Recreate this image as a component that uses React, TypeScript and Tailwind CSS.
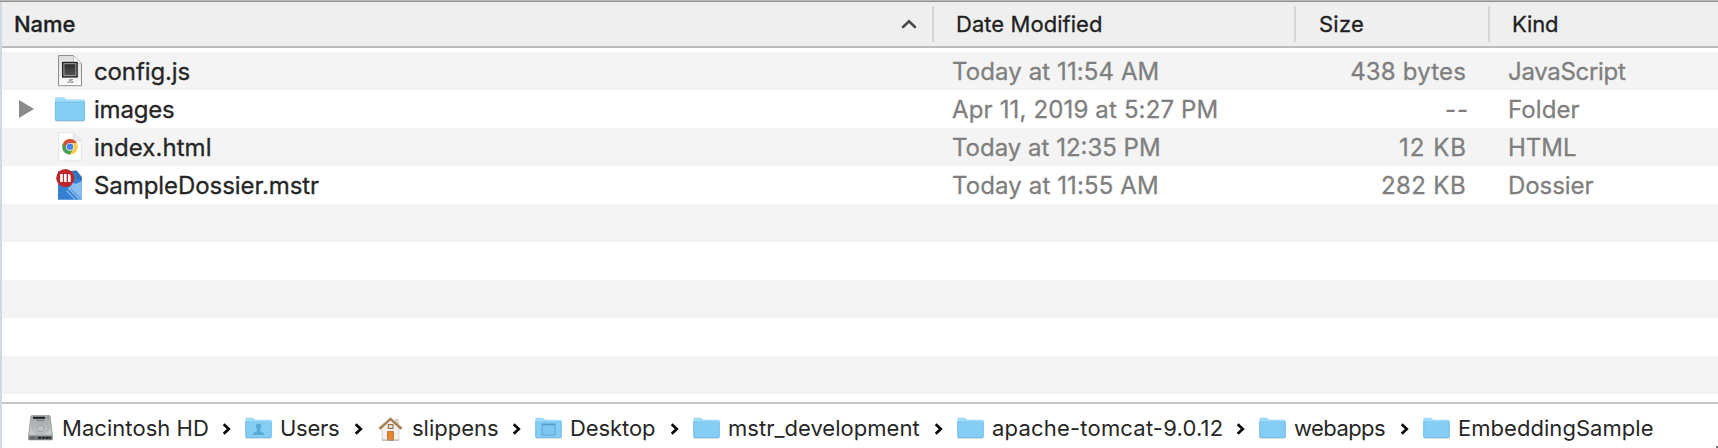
import type { ReactNode } from "react";

function ScriptFileIcon() {
  return (
    <svg viewBox="0 0 32 36" className="h-9 w-8 shrink-0">
      <defs>
        <linearGradient id="js-page" x1="0" y1="0" x2="0" y2="1">
          <stop offset="0" stopColor="#dedede" />
          <stop offset="0.7" stopColor="#efefef" />
          <stop offset="1" stopColor="#ffffff" />
        </linearGradient>
        <linearGradient id="js-core" x1="0" y1="0" x2="0" y2="1">
          <stop offset="0" stopColor="#2c2c2c" />
          <stop offset="1" stopColor="#555555" />
        </linearGradient>
      </defs>
      <path d="M4.500 2.500h15l8 8v22.200h-23z" fill="url(#js-page)" stroke="#8f8f8f" strokeWidth="1" strokeLinejoin="round" />
      <path d="M19.500 2.500v5.500q0 2.500 2.500 2.500h5.500z" fill="#fbfbfb" stroke="#b5b5b5" strokeWidth="0.700" />
      <rect x="8" y="8.800" width="15.800" height="15.800" fill="#222222" />
      <rect x="9.900" y="10.700" width="12" height="12" fill="url(#js-core)" stroke="#a8a8a8" strokeWidth="1" />
      <text x="16.300" y="30" textAnchor="middle" fontFamily="Inter, sans-serif" fontSize="4.800" fontWeight="600" fill="#666666">JS</text>
    </svg>
  );
}

function FolderShape() {
  return (
    <>
      <path d="M1 7.500Q1 6.300 2.200 6.300H9q1 0 1.700.8l1.500 1.500H29.800q1.200 0 1.200 1.200V28.600q0 1.200-1.200 1.200H2.200Q1 29.800 1 28.600z" fill="#9edaf9" />
      <path d="M1 11.400H31V28.600q0 1.200-1.200 1.200H2.200Q1 29.800 1 28.600z" fill="#84cdf5" />
      <path d="M1 11.400H31" stroke="#6ab7e3" strokeWidth="0.800" />
      <path d="M1 12.300H31" stroke="#8dd2f7" strokeWidth="0.800" />
      <path d="M1.400 11V28.400q0 1 1 1H29.600q1 0 1-1V11" fill="none" stroke="#70b8df" strokeWidth="0.800" />
      <path d="M1.800 30.300H30.200" stroke="#9a9a9a" strokeOpacity="0.500" strokeWidth="0.700" />
    </>
  );
}

function FolderIcon() {
  return (
    <svg viewBox="0 0 32 36" className="h-9 w-8 shrink-0">
      <FolderShape />
    </svg>
  );
}

function HtmlFileIcon() {
  return (
    <svg viewBox="0 0 32 36" className="h-9 w-8 shrink-0">
      <path d="M4.700 3.700h14.500l8 8v20h-22.500z" fill="#ffffff" stroke="#dcdcdc" strokeWidth="0.700" />
      <path d="M19.200 3.700v5.500q0 2.500 2.500 2.500h5.500z" fill="#eeeeee" stroke="#d6d6d6" strokeWidth="0.600" />
      <g transform="translate(16 17.800)">
        <circle r="7.800" fill="#f7cf4d" />
        <path d="M0 0L-6.750-3.900A7.800 7.800 0 0 0 0 7.800L3.200 2z" fill="#4c9c5a" />
        <path d="M0-3.900H6.750A7.800 7.800 0 0 0-6.750-3.900L-3.200 2L0 0z" fill="#d3503f" />
        <circle r="3.900" fill="#ffffff" />
        <circle r="3.300" fill="#4a86ee" />
      </g>
    </svg>
  );
}

function DossierFileIcon() {
  return (
    <svg viewBox="0 0 32 36" className="h-9 w-8 shrink-0">
      <path d="M4 4h16.500l7.300 7.500V32.800H4z" fill="#3580d0" />
      <path d="M18.500 3.800h4l5.300 7.200v2.500z" fill="#2562a8" />
      <path d="M20.500 3.800h2.300l5 6.200v1.800h-5.500z" fill="#2f72bd" />
      <path d="M27.800 14v18.800h-3L17.300 25l-3.800-3.600 3.100-1.900 2-3.800 3.500 1z" fill="#8abdf0" />
      <path d="M13.300 22.500l9.500 9.800M17 22l9.500 9.800" stroke="#3d86d4" strokeWidth="1" />
      <path d="M12.500 23.700l8.800 9" stroke="#8abdf0" strokeWidth="1.200" />
      <circle cx="11.300" cy="11" r="9.100" fill="#c3262a" />
      <path d="M7.500 7v8M11.300 7v8" stroke="#ffffff" strokeWidth="2.700" />
      <path d="M14 7q2.700 0 2.700 2.700V15H14z" fill="#ffffff" />
    </svg>
  );
}

function PathFolderIcon({ children }: { children?: ReactNode }) {
  return (
    <svg viewBox="0.500 5.500 31 25.500" preserveAspectRatio="none" className="h-[22px] w-[27px] shrink-0">
      <FolderShape />
      {children}
    </svg>
  );
}

function DriveIcon() {
  return (
    <svg viewBox="0 0 27 27" className="h-[27px] w-[27px] shrink-0">
      <defs>
        <linearGradient id="drive-top" x1="0" y1="0" x2="0" y2="1">
          <stop offset="0" stopColor="#9ea3a5" />
          <stop offset="1" stopColor="#c9cdcf" />
        </linearGradient>
      </defs>
      <path d="M3.800 1.500q.2-1 1.200-1H22q1 0 1.200 1L25.300 20H1.700z" fill="url(#drive-top)" stroke="#8d9193" strokeWidth="0.700" />
      <path d="M1.300 19.800H25.700V24q0 1.200-1.200 1.200h-22Q1.300 25.200 1.300 24z" fill="#777b7d" />
      <path d="M1.500 20H25.500" stroke="#dde0e1" strokeWidth="0.800" />
      <path d="M6 2.800H18" stroke="#1c1d1e" strokeWidth="2" />
      <path d="M9.500 5.200h8M20.500 2.800h1.500" stroke="#666b6d" strokeWidth="0.800" />
      <ellipse cx="13.500" cy="13" rx="8" ry="5.500" fill="none" stroke="#a2a7aa" strokeWidth="0.800" />
      <ellipse cx="13.500" cy="13.500" rx="4" ry="3.200" fill="#bfc3c5" stroke="#8f9496" strokeWidth="0.800" />
      <path d="M4 22.600H8M19 22.600h4" stroke="#55595b" strokeWidth="1.400" />
      <path d="M11 22.700H24" stroke="#1d1e1f" strokeWidth="2" strokeDasharray="3 .8" />
    </svg>
  );
}

function HomeIcon() {
  return (
    <svg viewBox="0 0 27 27" className="h-[27px] w-[27px] shrink-0">
      <path d="M5 13L13.500 5L22 13V25H5z" fill="#f1f0ee" stroke="#c5c2bd" strokeWidth="0.600" />
      <path d="M18.300 4.500h2.800v6l-2.800-2.500z" fill="#e6e5e3" stroke="#aaa49c" strokeWidth="0.600" />
      <path d="M2.500 13.800L13.500 3.900L24.500 13.800" fill="none" stroke="#a27a4e" strokeWidth="2.500" />
      <path d="M3.500 12.200L13.500 3.200L23.500 12.200" fill="none" stroke="#c7a377" strokeWidth="0.700" />
      <rect x="11.300" y="9.500" width="4.600" height="4" fill="#e9e2d6" stroke="#9b6f42" strokeWidth="1.100" />
      <rect x="10.600" y="16.600" width="5.800" height="8.700" fill="#e5852c" stroke="#b0672a" strokeWidth="0.800" />
      <path d="M5 25.200H22" stroke="#a9a6a2" strokeWidth="0.900" />
    </svg>
  );
}

function UsersFolderIcon() {
  return (
    <PathFolderIcon>
      <path d="M9.500 26.500V25q0-1.200 2-1.900l2.800-1.200v-2q-1.300-1.500-1.300-3.800 0-3.200 3-3.200t3 3.200q0 2.300-1.300 3.800v2l2.800 1.200q2 .7 2 1.900v1.500z" fill="#58a9d5" />
    </PathFolderIcon>
  );
}

function DesktopFolderIcon() {
  return (
    <PathFolderIcon>
      <rect x="8.500" y="13.700" width="15.200" height="12.800" fill="#7cc6f0" stroke="#57a7d4" strokeWidth="1" />
      <path d="M8.500 14.200H23.700" stroke="#4f9fce" strokeWidth="1.700" />
    </PathFolderIcon>
  );
}

const columnHeads = [
  { label: "Date Modified", cell: "w-[362px] pl-6 tracking-[0.05px]" },
  { label: "Size", cell: "w-[194px] pl-[25px] tracking-[0.24px]" },
  { label: "Kind", cell: "grow pl-6 tracking-[-0.15px]" },
];

const files = [
  {
    name: "config.js", nameSpacing: "tracking-[-0.12px]", icon: <ScriptFileIcon />,
    date: "Today at 11:54 AM", dateSpacing: "tracking-[0.1px]",
    size: "438 bytes", sizeSpacing: "tracking-[0.17px]",
    kind: "JavaScript", kindSpacing: "tracking-[-0.3px]",
  },
  {
    name: "images", nameSpacing: "tracking-[-0.2px]", icon: <FolderIcon />, expandable: true,
    date: "Apr 11, 2019 at 5:27 PM", dateSpacing: "tracking-[0.15px]",
    size: "--", sizeSpacing: "-mr-[3px] ml-[3px] tracking-[0.9px]",
    kind: "Folder", kindSpacing: "tracking-[0.08px]",
  },
  {
    name: "index.html", nameSpacing: "tracking-[0.05px]", icon: <HtmlFileIcon />,
    date: "Today at 12:35 PM", dateSpacing: "tracking-normal",
    size: "12 KB", sizeSpacing: "-mr-px ml-px tracking-[1px]",
    kind: "HTML", kindSpacing: "tracking-normal",
  },
  {
    name: "SampleDossier.mstr", nameSpacing: "tracking-[-0.07px]", icon: <DossierFileIcon />,
    date: "Today at 11:55 AM", dateSpacing: "tracking-[0.12px]",
    size: "282 KB", sizeSpacing: "tracking-[0.4px]",
    kind: "Dossier", kindSpacing: "tracking-[-0.06px]",
  },
];

const crumbs = [
  { label: "Macintosh HD", box: "w-[218px] tracking-[0.05px]", icon: <DriveIcon /> },
  { label: "Users", box: "w-[132px] tracking-[-0.27px]", icon: <UsersFolderIcon /> },
  { label: "slippens", box: "w-[158px] tracking-normal", icon: <HomeIcon /> },
  { label: "Desktop", box: "w-[158px] tracking-[-0.09px]", icon: <DesktopFolderIcon /> },
  { label: "mstr_development", box: "w-[264px] tracking-[0.02px]", icon: <PathFolderIcon /> },
  { label: "apache-tomcat-9.0.12", box: "w-[302px] tracking-[0.2px]", icon: <PathFolderIcon /> },
  { label: "webapps", box: "w-[164px] tracking-[-0.57px]", icon: <PathFolderIcon /> },
  { label: "EmbeddingSample", box: "tracking-[0.04px]", icon: <PathFolderIcon /> },
];

export default function App() {
  return (
    <div className="relative flex h-[448px] w-[1718px] flex-col overflow-hidden bg-white font-['Inter',sans-serif] whitespace-nowrap text-[#262626]">
      <div className="h-px shrink-0 bg-[#b9b9b9]" />
      <div className="h-px shrink-0 bg-[#8f8f8f]" />
      <div className="flex grow flex-col border-l-2 border-[#d3d9e1]">
        <div className="flex h-[46px] shrink-0 border-b-2 border-[#bcbcbc] bg-[#efefef] text-[22px] text-[#1f1f1f] [-webkit-text-stroke:0.3px]">
          <div className="flex w-[930px] items-center justify-between pr-[15px] pl-[12px] font-medium tracking-[-0.06px]">
            Name
            <svg viewBox="0 0 16 10" className="h-[10px] w-4">
              <path d="M2 8L8 2.300L14 8" fill="none" stroke="#4a4a4a" strokeWidth="2.600" strokeLinecap="round" />
            </svg>
          </div>
          {columnHeads.map((head) => (
            <div key={head.label} className={`flex items-center ${head.cell} bg-[linear-gradient(#d5d5d5,#d5d5d5)] bg-[length:2px_36px] bg-[position:0_4px] bg-no-repeat`}>
              {head.label}
            </div>
          ))}
        </div>

        <div className="flex h-[354px] shrink-0 flex-col pt-1 text-2xl">
          {files.map((file) => (
            <div key={file.name} className="flex h-[38px] shrink-0 items-center odd:bg-[#f4f4f4] [-webkit-text-stroke:0.3px]">
              <div className="flex w-[949px] items-center">
                <div className="w-[52px] pl-[17px]">
                  {file.expandable && (
                    <svg viewBox="0 0 15 18" className="h-[18px] w-[15px]">
                      <path d="M0 0L15 9L0 18z" fill="#8a8a8a" />
                    </svg>
                  )}
                </div>
                {file.icon}
                <span className={`pt-0.5 pl-2 ${file.nameSpacing}`}>{file.name}</span>
              </div>
              <div className={`w-[365px] pt-0.5 pl-px text-[#7f7f7f] ${file.dateSpacing}`}>{file.date}</div>
              <div className={`w-[150px] pt-0.5 text-right text-[#7f7f7f] ${file.sizeSpacing}`}>{file.size}</div>
              <div className={`pt-0.5 pl-[42px] text-[#7f7f7f] ${file.kindSpacing}`}>{file.kind}</div>
            </div>
          ))}
          {[0, 1, 2, 3, 4].map((row) => (
            <div key={row} className="h-[38px] shrink-0 odd:bg-[#f4f4f4]" />
          ))}
        </div>

        <div className="flex h-[46px] shrink-0 items-center border-t-2 border-[#c8c8c8] pt-1 pl-[25px] text-[22px]">
          {crumbs.map((crumb, index) => (
            <div key={crumb.label} className={`flex shrink-0 items-center ${crumb.box}`}>
              {crumb.icon}
              <span className="pl-2">{crumb.label}</span>
              {index < crumbs.length - 1 && (
                <svg viewBox="0 0 9 12" className="mt-0.5 mr-[14px] ml-auto h-3 w-[9px]">
                  <path d="M1.700 1.200L6.800 6L1.700 10.800" fill="none" stroke="#0a0a0a" strokeWidth="2.700" />
                </svg>
              )}
            </div>
          ))}
        </div>
      </div>
      <div className="absolute right-0 bottom-0 size-0.5 bg-[#777777]" />
    </div>
  );
}
